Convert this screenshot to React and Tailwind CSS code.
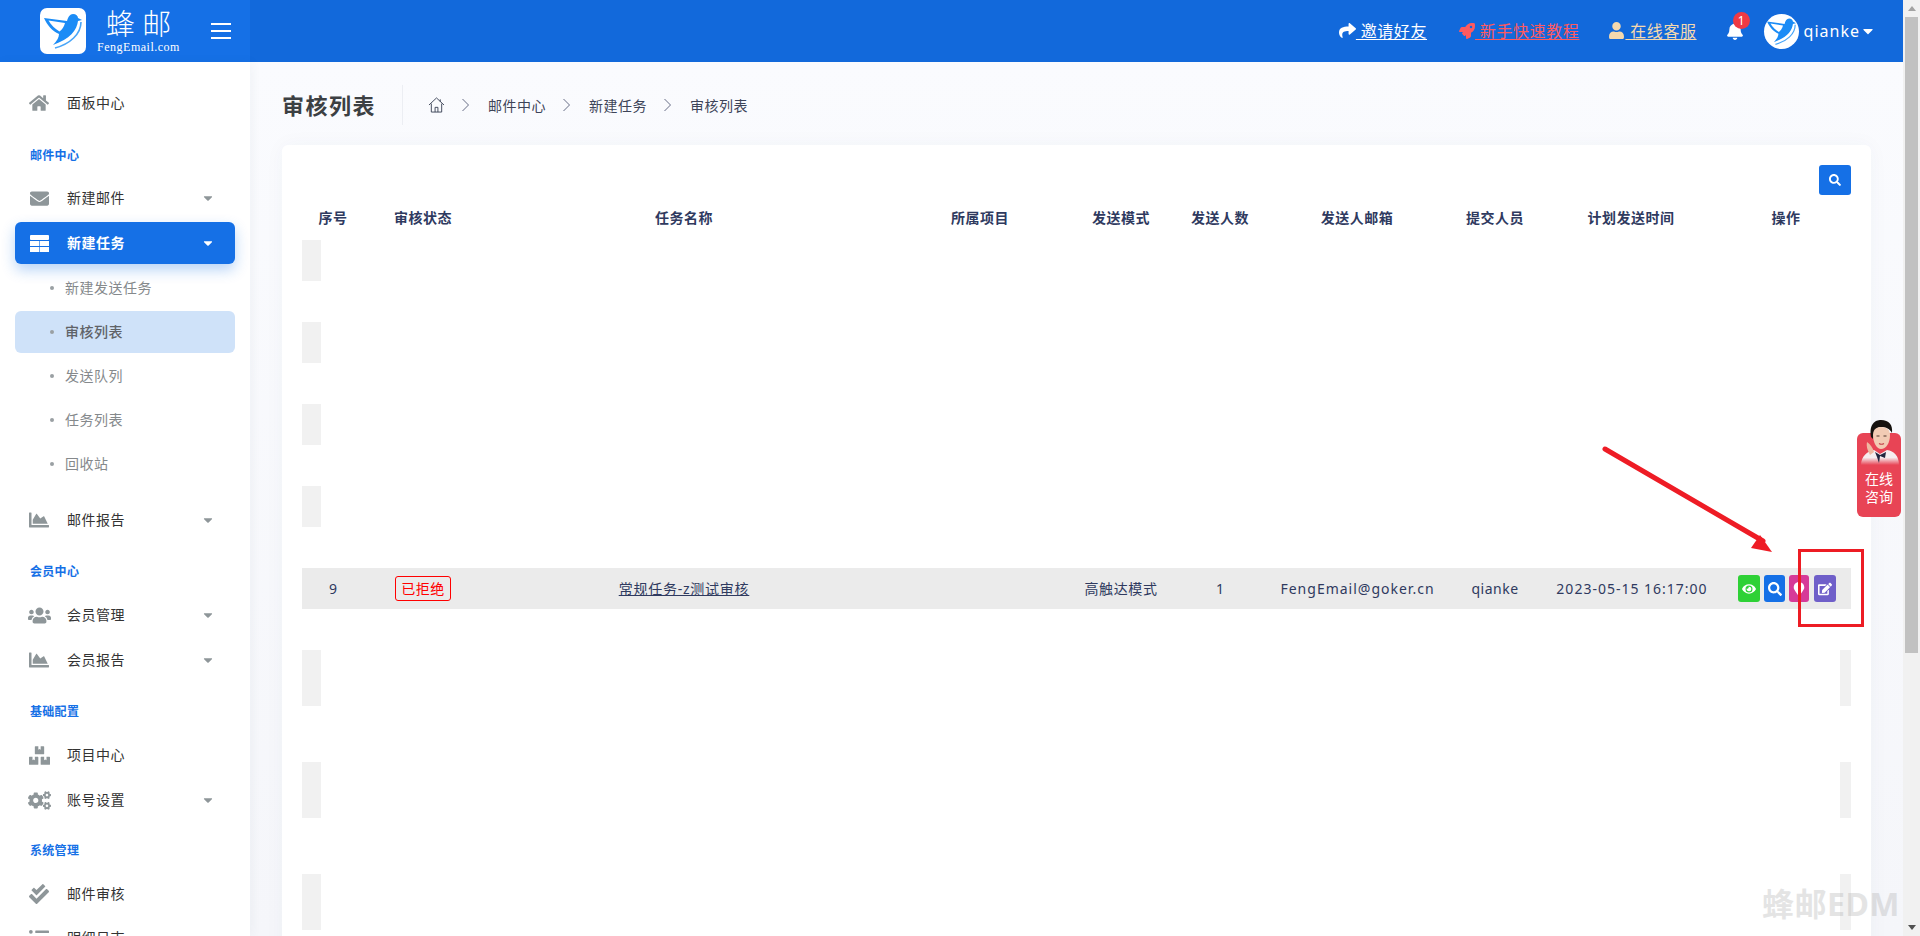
import React from "react";
import {
  FaHome, FaEnvelope, FaCaretDown, FaChartArea, FaUsers, FaBoxes, FaCogs,
  FaCheckDouble, FaListUl, FaShare, FaRocket, FaUser, FaBell, FaSearch, FaEye,
  FaMapMarker, FaEdit,
} from "react-icons/fa";

const font = { fontFamily: '"Noto Sans", "Noto Sans CJK SC", sans-serif' };

const tableCols = "grid grid-cols-[62px_118px_404px_188px_94px_104px_170px_106px_166px_137px]";
const headers = ["序号", "审核状态", "任务名称", "所属项目", "发送模式", "发送人数", "发送人邮箱", "提交人员", "计划发送时间", "操作"];

const Bird = ({ className }) => (
  <svg viewBox="0 0 46 46" className={className}>
    <path
      d="M4 10 L27 13 C28 9 30 6 33 6 C36 6 38 8 38 10 L42 12 L38 13 C37 22 30 31 13 37 C17 33 19 29 19 26 C12 23 7 17 4 10 Z"
      fill="#1b8cf6"
    />
    <path d="M8.5 12.5 L25 15 C24 19 22 21.5 19.5 23.5 C15 21 11 17 8.5 12.5 Z" fill="#fff" />
    <path d="M41 14 C41 26 30 36 15 40" fill="none" stroke="#4aa6f8" strokeWidth="1.6" />
  </svg>
);

// 新建任务的表格图标：上面整行，下面两行分两列
const TableIcon = ({ className }) => (
  <svg viewBox="0 0 19 17" className={className} fill="currentColor">
    <rect x="0" y="0" width="19" height="5" rx="1" />
    <rect x="0" y="6" width="9.2" height="5" />
    <rect x="9.8" y="6" width="9.2" height="5" />
    <rect x="0" y="12" width="9.2" height="5" />
    <rect x="9.8" y="12" width="9.2" height="5" />
  </svg>
);

const MenuItem = ({ icon: Icon, iconClass = "text-[20px]", label, caret, active, className = "" }) => (
  <div
    className={`mx-[15px] flex items-center pl-[14px] pr-[20px] ${
      active
        ? "h-[42px] mt-[2px] rounded-md bg-[#1570e6] text-white font-bold shadow-[0_6px_14px_rgba(21,112,230,0.3)]"
        : "h-[44px] text-[#333]"
    } ${className}`}
  >
    <span className="w-5 flex justify-center">
      <Icon className={`shrink-0 ${iconClass} ${active ? "text-white" : "text-[#8e9699]"}`} />
    </span>
    <span className="ml-[18px] pb-[2px] flex-1 text-[14px] tracking-[0.5px]">{label}</span>
    {caret && <FaCaretDown className={`text-[14px] ${active ? "text-white" : "text-[#8e9699]"}`} />}
  </div>
);

const SectionLabel = ({ children, className = "" }) => (
  <div className={`h-6 pl-[30px] pt-[2px] flex items-center text-[12px] font-bold tracking-[0.3px] text-[#1570e6] ${className}`}>
    {children}
  </div>
);

const SubItem = ({ label, active }) => (
  <div className="h-[44px] mx-[15px] py-px">
    <div className={`h-[42px] flex items-center pl-[35px] rounded-md ${active ? "bg-[#cfe2f9] text-[#5f6368] font-medium" : "text-[#85898c]"}`}>
      <span className="w-1 h-1 rounded-full bg-[#9aa0a3]" />
      <span className="ml-[11px] pb-[2px] text-[14px] tracking-[0.5px]">{label}</span>
    </div>
  </div>
);

const Sidebar = () => (
  <aside className="w-[250px] shrink-0 bg-white pt-[19px] shadow-[2px_0_10px_rgba(60,70,100,0.05)] z-10">
    <MenuItem icon={FaHome} label="面板中心" />
    <SectionLabel className="mt-[18px] mb-[9px]">邮件中心</SectionLabel>
    <MenuItem icon={FaEnvelope} iconClass="text-[19px]" label="新建邮件" caret />
    <MenuItem icon={TableIcon} iconClass="w-[19px] h-[17px]" label="新建任务" caret active />
    <div className="mt-[2px]">
      <SubItem label="新建发送任务" />
      <SubItem label="审核列表" active />
      <SubItem label="发送队列" />
      <SubItem label="任务列表" />
      <SubItem label="回收站" />
    </div>
    <MenuItem icon={FaChartArea} label="邮件报告" caret className="mt-3" />
    <SectionLabel className="mt-[17px] mb-[10px]">会员中心</SectionLabel>
    <MenuItem icon={FaUsers} iconClass="text-[23px]" label="会员管理" caret />
    <MenuItem icon={FaChartArea} label="会员报告" caret className="mt-px" />
    <SectionLabel className="mt-[17px] mb-[10px]">基础配置</SectionLabel>
    <MenuItem icon={FaBoxes} iconClass="text-[21px]" label="项目中心" />
    <MenuItem icon={FaCogs} iconClass="text-[23px]" label="账号设置" caret className="mt-px" />
    <SectionLabel className="mt-4 mb-[10px]">系统管理</SectionLabel>
    <MenuItem icon={FaCheckDouble} label="邮件审核" />
    <MenuItem icon={FaListUl} label="明细日志" />
  </aside>
);

const TopBar = () => (
  <header className="h-[62px] shrink-0 flex bg-[#1269db] text-white">
    <div className="w-[250px] shrink-0 bg-[#1570e6] flex items-center pl-10">
      <div className="w-[46px] h-[46px] rounded-[7px] bg-white">
        <Bird className="w-[46px] h-[46px]" />
      </div>
      <div className="ml-3 w-[81px] flex flex-col items-center">
        <span className="text-[29px] leading-[32px] font-light whitespace-pre">蜂 邮</span>
        <span className="text-[12px] leading-[14px] tracking-[0.5px]" style={{ fontFamily: '"Liberation Serif", serif' }}>
          FengEmail.com
        </span>
      </div>
      <div className="ml-8 w-5 flex flex-col gap-[5px]">
        <span className="h-0.5 bg-white" />
        <span className="h-0.5 bg-white" />
        <span className="h-0.5 bg-white" />
      </div>
    </div>
    <div className="flex-1 flex items-center justify-end pr-[27px] text-[16px] tracking-[0.6px]">
      <a className="underline underline-offset-2">
        <FaShare className="inline text-[17px] align-[-2px]" /> 邀请好友
      </a>
      <a className="ml-[32px] underline underline-offset-2 text-[#ff5a5f]">
        <FaRocket className="inline text-[16px] align-[-2px]" /> 新手快速教程
      </a>
      <a className="ml-[29px] underline underline-offset-2 text-[#f5d9ae]">
        <FaUser className="inline text-[17px] align-[-2px]" /> 在线客服
      </a>
      <div className="relative ml-[29px]">
        <FaBell className="text-[18px]" />
        <span className="absolute -top-[10px] left-[7px] w-[17px] h-[17px] rounded-full bg-[#ee3a43] text-[12px] leading-[17px] text-center tracking-normal">1</span>
      </div>
      <div className="ml-[20px] w-[35px] h-[35px] rounded-full bg-white overflow-hidden">
        <Bird className="w-[35px] h-[35px]" />
      </div>
      <span className="ml-[5px] tracking-[1px]">qianke</span>
      <FaCaretDown className="text-[16px]" />
    </div>
  </header>
);

const Crumbs = () => (
  <div className="flex items-center h-10">
    <h1 className="text-[22px] font-bold tracking-[1.5px] text-[#3c4043] w-[120px]">审核列表</h1>
    <div className="w-px h-10 bg-[#eceef3]" />
    <svg viewBox="0 0 18 17" className="ml-[25px] w-[17px] h-[16px] text-[#3d4458]" fill="none" stroke="currentColor" strokeWidth="1">
      <path d="M1 8.5 L9 1 L17 8.5 M3.5 7 V16 H14.5 V7 M7.5 16 V11 H10.5 V16 M13 2.5 V5" />
    </svg>
    {["邮件中心", "新建任务", "审核列表"].map((c) => (
      <React.Fragment key={c}>
        <svg viewBox="0 0 7 14" className="ml-[17px] w-[7px] h-[14px] text-[#666c85]" fill="none" stroke="currentColor" strokeWidth="1">
          <path d="M0.5 1 L6.5 7 L0.5 13" />
        </svg>
        <span className="ml-[19px] text-[14px] tracking-[0.5px] text-[#3d4458]">{c}</span>
      </React.Fragment>
    ))}
  </div>
);

const ActionBtn = ({ color, icon: Icon, className = "" }) => (
  <span className={`h-[27px] rounded-[3px] flex items-center justify-center text-white ${color} ${className}`}>
    <Icon className="text-[14px]" />
  </span>
);

// 灰色占位行，前面几行高度 41，后面高度 56
const EmptyRow = ({ tall, right }) => (
  <div className={`flex justify-between ${tall ? "h-[56px] mb-[56px]" : "h-[41px] mb-[41px]"}`}>
    <div className="w-[19px] bg-[#f1f1f1]" />
    {right && <div className="w-[11px] bg-[#f1f1f1]" />}
  </div>
);

const ListTable = () => (
  <div className="text-[14px] text-[#2f3a5f]">
    <div className={`${tableCols} h-[45px] items-center text-center font-bold tracking-[0.5px]`}>
      {headers.map((h) => (
        <div key={h} className={h === "操作" ? "pl-[7px]" : ""}>{h}</div>
      ))}
    </div>
    <EmptyRow />
    <EmptyRow />
    <EmptyRow />
    <EmptyRow />
    <div className={`${tableCols} h-[41px] mb-[41px] items-center text-center bg-[#ebebeb]`}>
      <div>9</div>
      <div className="flex justify-center">
        <span className="h-[25px] w-[56px] rounded-[3px] border border-[#ff0000] text-[#ff0000] tracking-[0.5px] leading-[23px]">已拒绝</span>
      </div>
      <div><a className="underline tracking-[0.75px]">常规任务-z测试审核</a></div>
      <div />
      <div className="tracking-[0.6px]">高触达模式</div>
      <div>1</div>
      <div className="tracking-[1px] pl-px">FengEmail@goker.cn</div>
      <div className="tracking-[0.5px]">qianke</div>
      <div className="tracking-[1px] whitespace-nowrap pl-[2px]">2023-05-15 16:17:00</div>
      <div className="flex pl-6">
        <ActionBtn color="bg-[#2ed136]" icon={FaEye} className="w-[22px]" />
        <ActionBtn color="bg-[#1570e6]" icon={FaSearch} className="w-[21px] ml-1" />
        <ActionBtn color="bg-[#d63a98]" icon={FaMapMarker} className="w-5 ml-1" />
        <ActionBtn color="bg-[#6f5fc9]" icon={FaEdit} className="w-[22px] ml-[5px]" />
      </div>
    </div>
    <EmptyRow tall right />
    <EmptyRow tall right />
    <EmptyRow tall right />
  </div>
);

const Consult = () => (
  <div className="absolute right-[19px] top-[433px] w-[44px] h-[84px] rounded-md bg-[#e84455] text-white text-[14px] leading-[18px] text-center z-20">
    <svg viewBox="0 0 40 46" className="absolute -top-[14px] left-[3px] w-[40px] h-[46px]">
      <defs>
        <linearGradient id="shirt" x1="0" y1="0" x2="0" y2="1">
          <stop offset="0.5" stopColor="#f6eef0" />
          <stop offset="1" stopColor="#e84455" />
        </linearGradient>
      </defs>
      <path d="M1 46 C1 37 8 32 14 31 L20 35 L27 31 C34 32 39 37 39 46 Z" fill="url(#shirt)" />
      <path d="M15 33 L20 36 L26 33 L25 39 L20 37 L19 44 L17 38 Z" fill="#23253f" />
      <path d="M11 18 C9 5 15 1 21 1 C29 1 33 6 32 14 C30 10 26 8 21 8 C16 8 14 12 13 20 Z" fill="#16120f" />
      <path d="M13 16 C13 10 17 8 21 8 C27 8 30 11 30 16 C30 24 26 30 21 30 C17 30 13 24 13 16 Z" fill="#f2cbb4" />
      <path d="M7 23 C10 25 13 29 14 33 L10 36 C8 32 6 28 7 23 Z" fill="#eeb9a2" />
      <path d="M16.5 17 h3 M23.5 17 h3" stroke="#3a241c" strokeWidth="0.9" />
      <path d="M19 24.5 q2.5 1.6 5 0" stroke="#c5414a" strokeWidth="1.1" fill="none" />
    </svg>
    <div className="pt-[37px]">在线<br />咨询</div>
  </div>
);

const Scrollbar = () => (
  <div className="w-[17px] shrink-0 bg-[#f1f1f1] flex flex-col items-center">
    <svg viewBox="0 0 8 5" className="w-2 h-[5px] mt-[6px] text-[#a3a3a3]" fill="currentColor"><path d="M4 0 L8 5 H0 Z" /></svg>
    <div className="w-[13px] h-[636px] mt-[6px] bg-[#c1c1c1]" />
    <svg viewBox="0 0 8 5" className="w-2 h-[5px] mt-auto mb-[6px] text-[#505050]" fill="currentColor"><path d="M0 0 H8 L4 5 Z" /></svg>
  </div>
);

export default function App() {
  return (
    <div className="relative h-screen flex overflow-hidden bg-white" style={font}>
      <div className="flex-1 min-w-0 flex flex-col">
        <TopBar />
        <div className="flex-1 min-h-0 flex">
          <Sidebar />
          <main className="flex-1 min-w-0 px-8 bg-linear-to-b from-[#fafbfe] to-[#f5f6fa]">
            <div className="pt-[23px] pb-5">
              <Crumbs />
            </div>
            <div className="bg-white rounded-md px-5 pt-5 h-[900px] shadow-[0_0_20px_rgba(60,70,100,0.04)]">
              <div className="flex justify-end">
                <button className="w-8 h-[30px] rounded-[3px] bg-[#1570e6] text-white flex items-center justify-center">
                  <FaSearch className="text-[12px]" />
                </button>
              </div>
              <ListTable />
            </div>
          </main>
        </div>
      </div>
      <Scrollbar />

      {/* 标注：箭头和红框 */}
      <svg viewBox="0 0 180 115" className="absolute left-[1600px] top-[444px] w-[180px] h-[115px] z-20">
        <path d="M5 5 L163 97" stroke="#ee1c25" strokeWidth="5" strokeLinecap="round" />
        <path d="M172 108 L160 91 L151 104 Z" fill="#ee1c25" />
      </svg>
      <div className="absolute left-[1798px] top-[549px] w-[66px] h-[78px] border-[3px] border-[#ed1c24] z-20" />

      <Consult />

      {/* 水印 */}
      <div className="absolute left-[1762px] top-[886px] text-[32px] leading-9 font-bold tracking-[0.5px] whitespace-nowrap text-[#a8a8a8] opacity-30 z-20">
        蜂邮EDM
      </div>
    </div>
  );
}
